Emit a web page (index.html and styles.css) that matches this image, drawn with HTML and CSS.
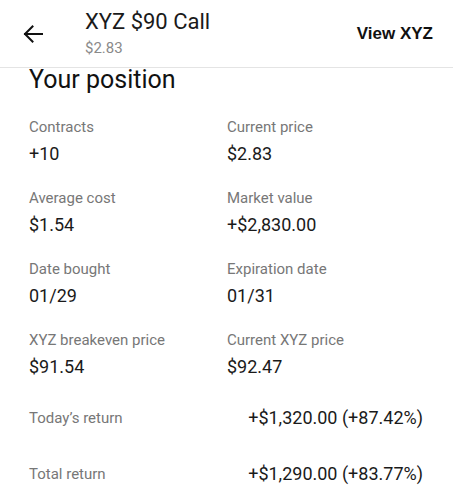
FILE: index.html
```html
<!DOCTYPE html>
<html>
<head>
<meta charset="utf-8">
<link rel="stylesheet" href="styles.css">
</head>
<body>
<header class="topbar">
  <div class="back">
    <svg width="20" height="18" viewBox="0 0 20 18"><path d="M19 9H2M9.5 1.5L2 9l7.5 7.5" fill="none" stroke="#111" stroke-width="2" stroke-linecap="square"/></svg>
  </div>
  <div class="title-block">
    <div class="title">XYZ $90 Call</div>
    <div class="subtitle">$2.83</div>
  </div>
  <div class="view-link">View XYZ</div>
</header>
<main class="content">
  <h1 class="heading">Your position</h1>
  <div class="grid">
    <div class="cell"><div class="label">Contracts</div><div class="value">+10</div></div>
    <div class="cell"><div class="label">Current price</div><div class="value">$2.83</div></div>
    <div class="cell"><div class="label">Average cost</div><div class="value">$1.54</div></div>
    <div class="cell"><div class="label">Market value</div><div class="value">+$2,830.00</div></div>
    <div class="cell"><div class="label">Date bought</div><div class="value">01/29</div></div>
    <div class="cell"><div class="label">Expiration date</div><div class="value">01/31</div></div>
    <div class="cell"><div class="label">XYZ breakeven price</div><div class="value">$91.54</div></div>
    <div class="cell"><div class="label">Current XYZ price</div><div class="value">$92.47</div></div>
  </div>
  <div class="returns">
    <div class="return-row"><span class="label">Today’s return</span><span class="value">+$1,320.00 (+87.42%)</span></div>
    <div class="return-row"><span class="label">Total return</span><span class="value">+$1,290.00 (+83.77%)</span></div>
  </div>
</main>
</body>
</html>
```

FILE: styles.css
```css
* { box-sizing: border-box; }
body {
  margin: 0;
  background: #fff;
  font-family: Roboto, "Liberation Sans", sans-serif;
  color: #1a1a1a;
}
.topbar {
  height: 68px;
  display: flex;
  align-items: flex-start;
  border-bottom: 1px solid #e4e4e4;
}
.back {
  width: 85px;
  padding: 25px 0 0 23px;
}
.back svg { display: block; }
.title-block { flex: 1; padding-top: 8px; }
.title {
  font-size: 22px;
  line-height: 28px;
  color: #1a1a1a;
}
.subtitle {
  font-size: 15px;
  line-height: 24px;
  color: #8a8a8a;
}
.view-link {
  font-family: "Liberation Sans", Arial, sans-serif;
  font-weight: bold;
  font-size: 17px;
  padding: 24px 20px 0 0;
  color: #111;
}
.content { padding: 0 30px 0 29px; }
.heading {
  margin: 0;
  font-weight: normal;
  font-size: 25px;
  line-height: 24px;
  color: #111;
}
.grid {
  display: grid;
  grid-template-columns: 198px 1fr;
  row-gap: 17px;
  padding-top: 23px;
}
.label {
  font-size: 15px;
  line-height: 24px;
  color: #777;
}
.value {
  font-size: 18px;
  line-height: 30px;
  color: #1a1a1a;
}
.returns { padding-top: 8px; }
.return-row {
  display: flex;
  justify-content: space-between;
  align-items: center;
  height: 56px;
}
```
